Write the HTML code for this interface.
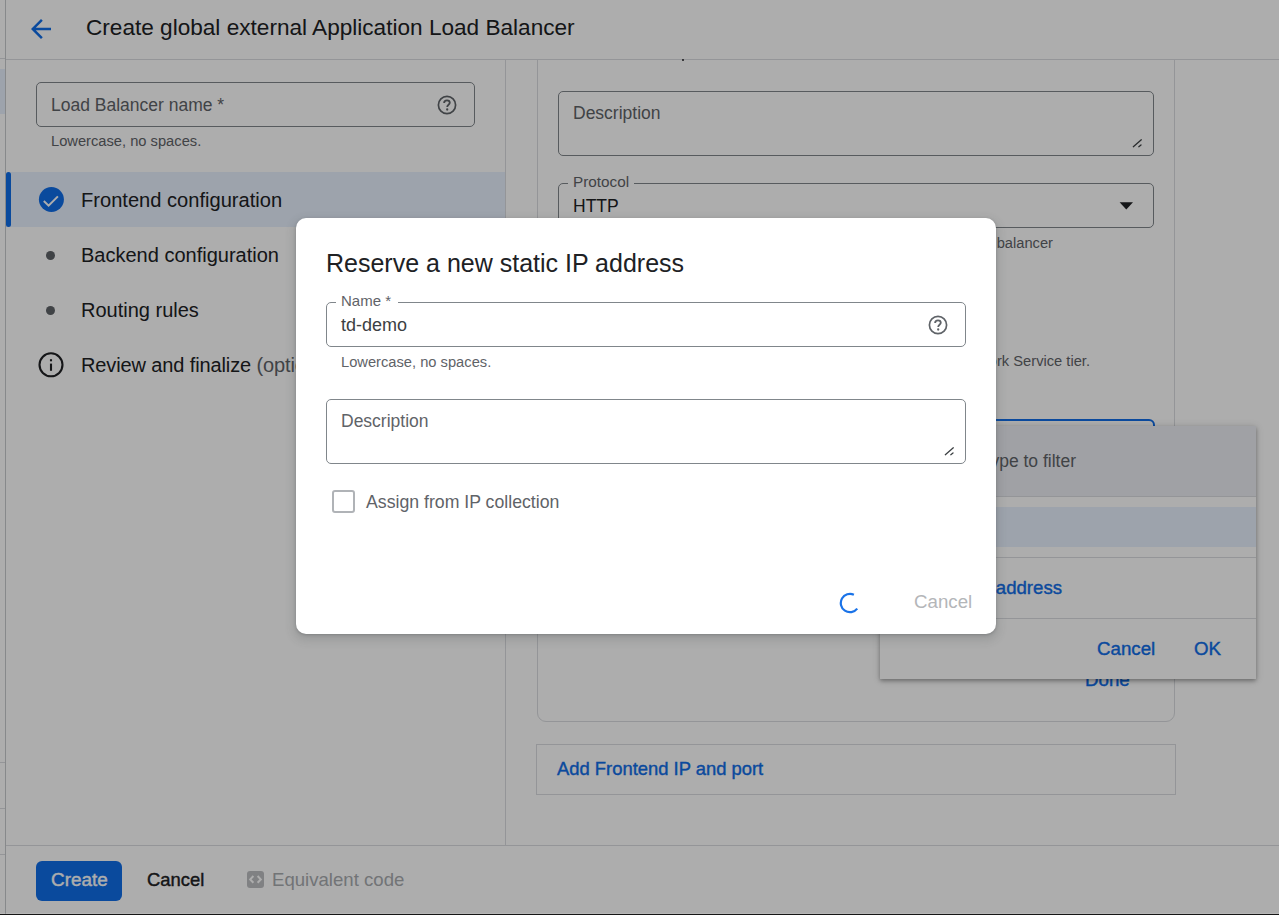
<!DOCTYPE html>
<html><head><meta charset="utf-8">
<style>
*{box-sizing:border-box;}
html,body{margin:0;padding:0;width:1279px;height:915px;overflow:hidden;background:#fff;}
body{position:relative;font-family:"Liberation Sans",sans-serif;color:#202124;}
.a{position:absolute;}
.t{position:absolute;white-space:nowrap;line-height:1;font-family:"Liberation Sans",sans-serif;}
.hl{position:absolute;background:#dadce0;}
.fld{position:absolute;border:1px solid #80868b;border-radius:5px;}
</style></head><body>

<!-- left nav strip -->
<div class="a" style="left:0;top:69px;width:5px;height:45px;background:#e8f0fe"></div>
<div class="hl" style="left:0;top:58px;width:5px;height:1px"></div>
<div class="hl" style="left:0;top:762px;width:5px;height:1px"></div>
<div class="hl" style="left:0;top:808px;width:5px;height:1px"></div>
<div class="hl" style="left:0;top:854px;width:5px;height:1px"></div>
<div class="hl" style="left:5px;top:0;width:1px;height:915px;background:#c8cacd"></div>

<div class="a" style="left:537px;top:40px;width:638px;height:682px;border:1px solid #dadce0;border-radius:0 0 9px 9px"></div>
<div class="a" style="left:6px;top:0;width:1273px;height:59px;background:#fff"></div>
<!-- header -->
<div class="hl" style="left:6px;top:59px;width:1273px;height:1px"></div>
<svg class="a" style="left:26px;top:14px" width="30" height="30" viewBox="0 0 24 24"><path d="M20 11H7.83l5.59-5.59L12 4l-8 8 8 8 1.41-1.41L7.83 13H20v-2z" fill="#106de8"/></svg>
<div class="t" style="left:86px;top:17px;font-size:22.6px">Create global external Application Load Balancer</div>

<!-- left panel -->
<div class="hl" style="left:505px;top:60px;width:1px;height:785px"></div>
<div class="fld" style="left:36px;top:82px;width:439px;height:45px"></div>
<div class="t" style="left:51px;top:97px;font-size:17.5px;color:#5f6368">Load Balancer name *</div>
<svg class="a" style="left:436px;top:94px" width="22" height="22" viewBox="0 0 22 22"><circle cx="11" cy="11" r="8.6" fill="none" stroke="#5f6368" stroke-width="1.7"/><path d="M8.1 9.1c0-1.7 1.3-2.8 2.9-2.8s2.8 1.1 2.8 2.5c0 1.9-2.6 2.1-2.6 4.1" fill="none" stroke="#5f6368" stroke-width="1.8"/><circle cx="11.2" cy="15.5" r="1.15" fill="#5f6368"/></svg>
<div class="t" style="left:51px;top:134px;font-size:14.7px;color:#5f6368">Lowercase, no spaces.</div>

<div class="a" style="left:6px;top:172px;width:499px;height:55px;background:#e8f0fe"></div>
<div class="a" style="left:6px;top:172px;width:5px;height:55px;background:#106de8;border-radius:3px"></div>
<svg class="a" style="left:38px;top:187px" width="26" height="26" viewBox="0 0 26 26"><circle cx="13.4" cy="12.5" r="12.5" fill="#106de8"/><path d="M5.8 14L10.6 18.6L19.9 9.4" fill="none" stroke="#fff" stroke-width="2"/></svg>
<div class="t" style="left:81px;top:190px;font-size:20.1px">Frontend configuration</div>

<div class="a" style="left:46px;top:251px;width:9px;height:9px;border-radius:50%;background:#5f6368"></div>
<div class="t" style="left:81px;top:245px;font-size:20px">Backend configuration</div>
<div class="a" style="left:46px;top:306px;width:9px;height:9px;border-radius:50%;background:#5f6368"></div>
<div class="t" style="left:81px;top:300px;font-size:20px">Routing rules</div>
<svg class="a" style="left:38px;top:352px" width="26" height="26" viewBox="0 0 26 26"><circle cx="13" cy="12.8" r="11.5" fill="none" stroke="#202124" stroke-width="2.1"/><rect x="11.95" y="11.6" width="2.1" height="7.2" fill="#202124"/><rect x="11.95" y="7.2" width="2.1" height="2.1" fill="#202124"/></svg>
<div class="t" style="left:81px;top:355px;font-size:20px;letter-spacing:-.12px">Review and finalize <span style="color:#5f6368">(optional)</span></div>

<!-- right panel -->
<div class="a" style="left:682px;top:59px;width:2px;height:2px;background:#202124;border-radius:1px"></div>
<div class="fld" style="left:558px;top:91px;width:596px;height:65px"></div>
<div class="t" style="left:573px;top:105px;font-size:17.5px;color:#5f6368">Description</div>
<svg class="a" style="left:1131px;top:136px" width="12" height="12" viewBox="0 0 12 12"><path d="M2.3 10.7L10.3 3.8M7.8 10.7L10 8.9" stroke="#3c4043" stroke-width="1.3" stroke-linecap="round"/></svg>

<div class="fld" style="left:558px;top:183px;width:596px;height:45px"></div>
<div class="a" style="left:568px;top:179px;width:66px;height:8px;background:#fff"></div>
<div class="t" style="left:573px;top:174px;font-size:15.3px;color:#5f6368">Protocol</div>
<div class="t" style="left:573px;top:198px;font-size:17.5px;color:#202124">HTTP</div>
<svg class="a" style="left:1118px;top:200px" width="17" height="11" viewBox="0 0 17 11"><path d="M1.6 2.3h13.4L8.3 9.4z" fill="#202124"/></svg>
<div class="t" style="right:226px;top:236px;font-size:14.7px;color:#5f6368">Required for the load balancer</div>
<div class="t" style="right:189px;top:354px;font-size:14.7px;color:#5f6368">Uses the Network Service tier.</div>

<div class="a" style="left:700px;top:419px;width:455px;height:120px;border:2px solid #106de8;border-radius:6px"></div>

<div class="t" style="left:1085px;top:671px;font-size:18.7px;color:#106de8;font-weight:normal;-webkit-text-stroke:.4px currentColor">Done</div>
<!-- dropdown panel -->
<div class="a" style="left:880px;top:426px;width:376px;height:253px;background:#fff;box-shadow:0 2px 4px rgba(0,0,0,.3),0 1px 8px rgba(0,0,0,.15)">
  <div class="a" style="left:0;top:0;width:376px;height:71px;background:#eceef3;border-bottom:1px solid #dadce0"></div>
  <div class="a" style="left:0;top:81px;width:376px;height:40px;background:#e8f0fe"></div>
  <div class="hl" style="left:0;top:131px;width:376px;height:1px"></div>
  <div class="hl" style="left:0;top:192px;width:376px;height:1px"></div>
</div>
<div class="t" style="right:203px;top:453px;font-size:17.5px;color:#5f6368">Type to filter</div>
<div class="t" style="right:217px;top:579px;font-size:18.6px;color:#106de8;font-weight:normal;-webkit-text-stroke:.4px currentColor">Reserve IP address</div>
<div class="t" style="left:1097px;top:640px;font-size:18.7px;color:#106de8;font-weight:normal;-webkit-text-stroke:.4px currentColor">Cancel</div>
<div class="t" style="left:1194px;top:640px;font-size:18.7px;color:#106de8;font-weight:normal;-webkit-text-stroke:.4px currentColor">OK</div>


<div class="a" style="left:536px;top:744px;width:640px;height:51px;border:1px solid #dadce0"></div>
<div class="t" style="left:557px;top:760px;font-size:18.4px;color:#106de8;font-weight:normal;-webkit-text-stroke:.4px currentColor">Add Frontend IP and port</div>

<!-- footer -->
<div class="hl" style="left:6px;top:845px;width:1273px;height:1px"></div>
<div class="a" style="left:36px;top:861px;width:86px;height:40px;background:#106de8;border-radius:6px"></div>
<div class="t" style="left:51px;top:871px;font-size:18.9px;color:#fff;font-weight:normal;-webkit-text-stroke:.4px currentColor">Create</div>
<div class="t" style="left:147px;top:871px;font-size:18.4px;color:#202124;font-weight:normal;-webkit-text-stroke:.4px currentColor">Cancel</div>
<svg class="a" style="left:247px;top:871px" width="17" height="17" viewBox="0 0 17 17"><rect width="17" height="17" rx="3" fill="#bdbfc2"/><path d="M6.4 5L3.2 8.4l3.2 3.4M10.6 5l3.2 3.4-3.2 3.4" fill="none" stroke="#fff" stroke-width="2"/></svg>
<div class="t" style="left:272px;top:871px;font-size:18.6px;color:#a8abaf">Equivalent code</div>


<!-- scrim -->
<div class="a" style="left:0;top:0;width:1279px;height:915px;background:rgba(0,0,0,.32)"></div>

<!-- dialog -->
<div class="a" style="left:296px;top:218px;width:700px;height:416px;background:#fff;border-radius:10px;box-shadow:0 1px 3px 0 rgba(60,64,67,.3),0 4px 8px 3px rgba(60,64,67,.15)">
</div>
<div class="t" style="left:326px;top:251px;font-size:25px">Reserve a new static IP address</div>
<div class="fld" style="left:326px;top:302px;width:640px;height:45px"></div>
<div class="a" style="left:336px;top:298px;width:62px;height:8px;background:#fff"></div>
<div class="t" style="left:341px;top:293px;font-size:15px;color:#5f6368">Name *</div>
<div class="t" style="left:341px;top:316px;font-size:18px;color:#3c4043">td-demo</div>
<svg class="a" style="left:927px;top:314px" width="22" height="22" viewBox="0 0 22 22"><circle cx="11" cy="11" r="8.6" fill="none" stroke="#5f6368" stroke-width="1.7"/><path d="M8.1 9.1c0-1.7 1.3-2.8 2.9-2.8s2.8 1.1 2.8 2.5c0 1.9-2.6 2.1-2.6 4.1" fill="none" stroke="#5f6368" stroke-width="1.8"/><circle cx="11.2" cy="15.5" r="1.15" fill="#5f6368"/></svg>
<div class="t" style="left:341px;top:355px;font-size:14.7px;color:#5f6368">Lowercase, no spaces.</div>
<div class="fld" style="left:326px;top:399px;width:640px;height:65px"></div>
<div class="t" style="left:341px;top:413px;font-size:17.5px;color:#5f6368">Description</div>
<svg class="a" style="left:943px;top:444px" width="12" height="12" viewBox="0 0 12 12"><path d="M2.3 10.7L10.3 3.8M7.8 10.7L10 8.9" stroke="#3c4043" stroke-width="1.3" stroke-linecap="round"/></svg>
<div class="a" style="left:332px;top:490px;width:23px;height:23px;border:2px solid #b0b3b7;border-radius:3px"></div>
<div class="t" style="left:366px;top:494px;font-size:17.7px;color:#5f6368">Assign from IP collection</div>
<svg class="a" style="left:838px;top:592px" width="24" height="24" viewBox="0 0 24 24"><path d="M15.89 2.66A9.2 9.2 0 1 0 19.25 16.66" fill="none" stroke="#1a73e8" stroke-width="2.2"/></svg>
<div class="t" style="left:914px;top:593px;font-size:18.7px;color:#b4b6b9">Cancel</div>

<div class="a" style="left:0;top:913px;width:1279px;height:1px;background:rgba(255,255,255,.12)"></div>
<div class="a" style="left:0;top:914px;width:1279px;height:1px;background:#151515"></div>
</body></html>
